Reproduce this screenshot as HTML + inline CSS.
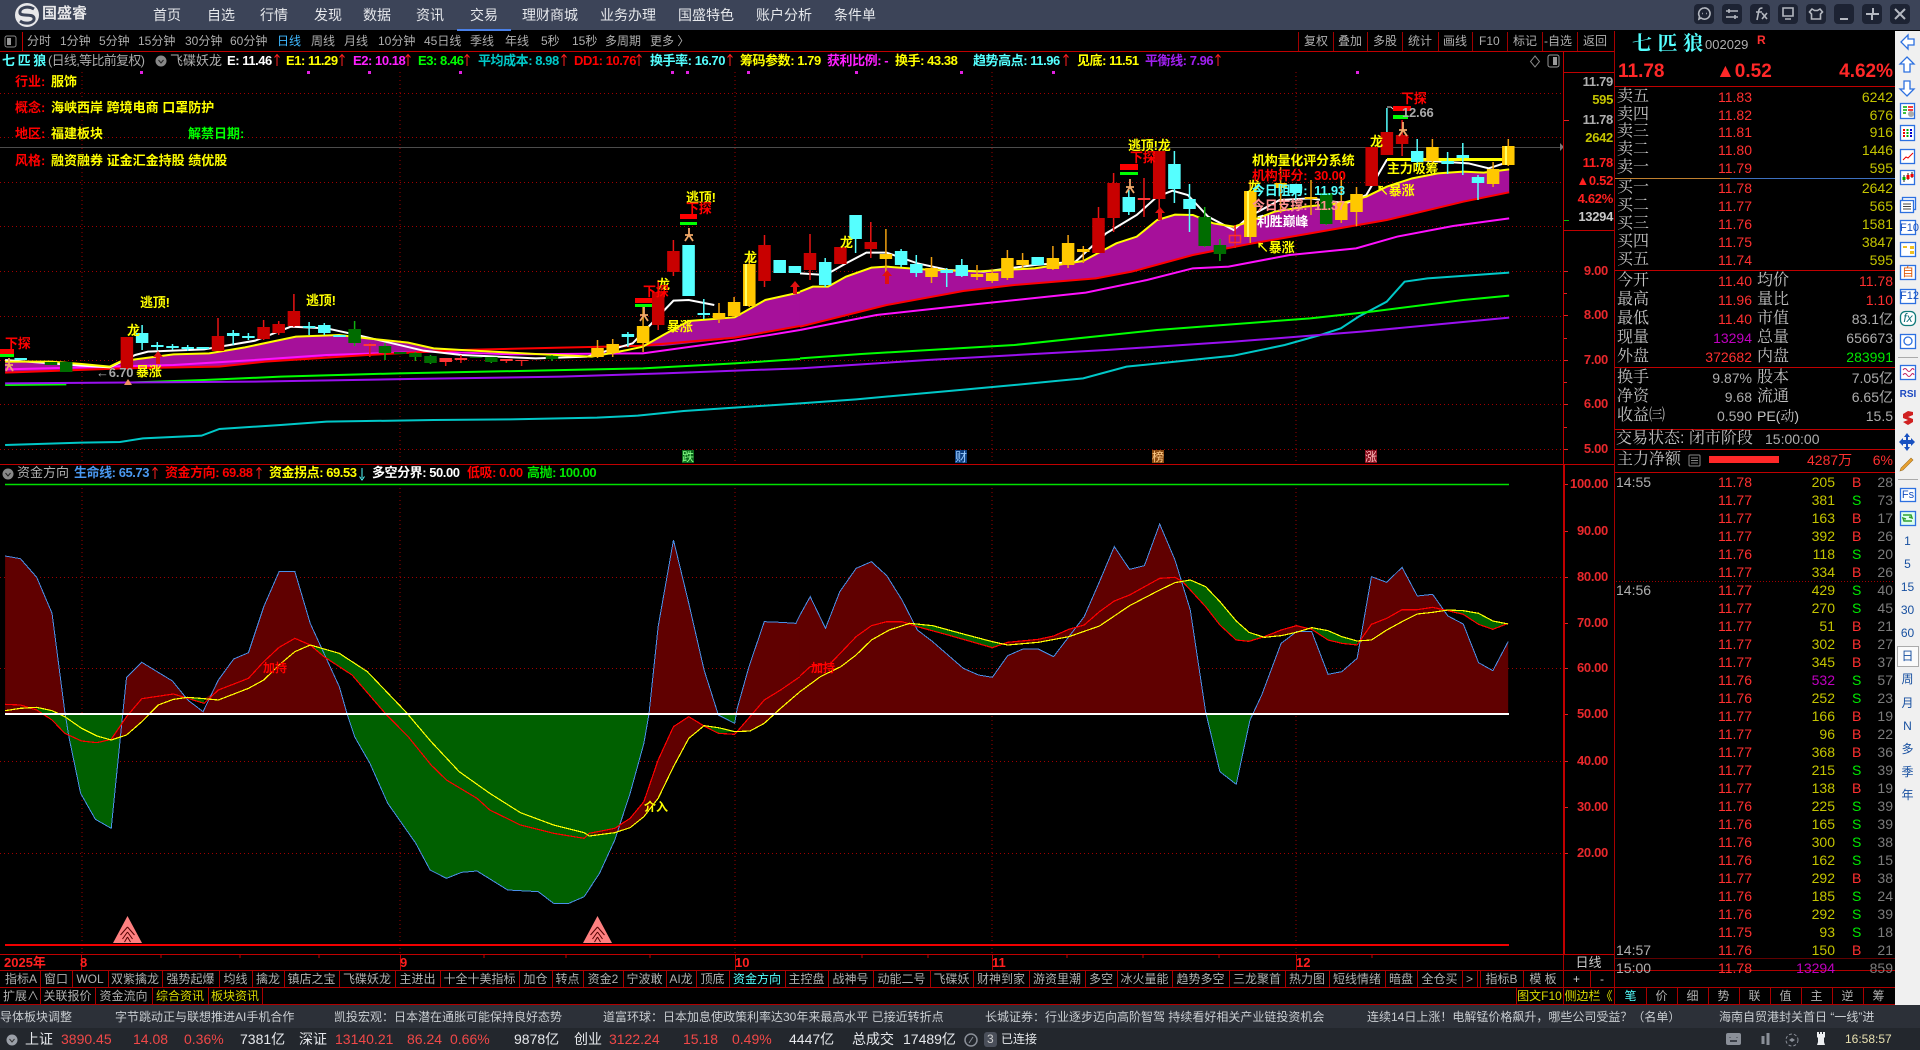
<!DOCTYPE html>
<html lang="zh-CN">
<head>
<meta charset="utf-8">
<title>国盛睿</title>
<style>
html,body{margin:0;padding:0;background:#000}
body{width:1920px;height:1050px;position:relative;overflow:hidden;font:12px/16px "Liberation Sans","WenQuanYi Zen Hei","Noto Sans CJK SC",sans-serif;color:#b0b0b0}
svg.bg{position:absolute;left:0;top:0}
.t{position:absolute;white-space:nowrap}
.n{font-size:14px;color:#e6e8ec;top:7px}
.p{color:#aeaeae;top:33px}
.i{font-size:13px;font-weight:bold;top:53px;letter-spacing:-.45px}
.l{font-size:13px;font-weight:bold;color:#ff0;}
.a{font-size:13px;font-weight:bold;color:#ff0;letter-spacing:-.2px}
.ax{font-size:13px;font-weight:bold;color:#e8282c;right:312px;letter-spacing:-.3px}
.at{font-size:13px;font-weight:bold;right:307px;letter-spacing:-.3px}
.tab{color:#b0b0b0;top:971px;text-align:center;height:16px}
.tb2{top:988px}
.lb{font-size:16px;color:#c4c4c4;left:1617px;font-family:"Liberation Sans","Noto Serif CJK SC",serif}
.lb2{left:1757px}
.v{font-size:14px;right:168px}
.v2{font-size:14px;right:27px}
.rd{color:#ff3030}.yl{color:#c4c400}.gy{color:#aeaeae}
.nw{color:#c8ccd0;top:1009px}
.st{font-size:14px;top:1031px}
#ticks{position:absolute;left:1615px;top:473px;width:280px;font-size:14px}
#ticks div{position:relative;height:18px;line-height:18px}
#ticks i,#ticks b,#ticks u,#ticks s,#ticks em{position:absolute;font-style:normal;font-weight:normal;text-decoration:none}
#ticks i{left:1px;color:#aeaeae}
#ticks b{right:143px;color:#ff3030}
#ticks u{right:60px;color:#c4c400}
#ticks s{left:237px;color:#ff3030}
#ticks s.g{color:#00e800}
#ticks em{right:2px;color:#7c7c7c}
</style>
</head>
<body>
<svg class="bg" width="1920" height="1050" viewBox="0 0 1920 1050" xmlns="http://www.w3.org/2000/svg">
<defs>
<clipPath id="up"><rect x="0" y="465" width="1563" height="249"/></clipPath>
<clipPath id="dn"><rect x="0" y="714" width="1563" height="230"/></clipPath>
</defs>
<rect width="1920" height="1050" fill="#000"/>
<!-- title bar -->
<rect width="1920" height="30" fill="#3c4458"/>
<rect x="457" y="29" width="54" height="2" fill="#4a80e8"/>
<!-- logo -->
<circle cx="27" cy="15" r="12" fill="#e8e8ea"/>
<path d="M34 9C27 5 19 8 20 13C21 17 33 13 34 18C35 23 26 25 20 21" fill="none" stroke="#3c4458" stroke-width="3"/>
<!-- window buttons -->
<g fill="#1d2333">
<rect x="1694" y="4" width="20" height="20" rx="4"/><rect x="1722" y="4" width="20" height="20" rx="4"/><rect x="1750" y="4" width="20" height="20" rx="4"/><rect x="1778" y="4" width="20" height="20" rx="4"/><rect x="1806" y="4" width="20" height="20" rx="4"/><rect x="1834" y="4" width="20" height="20" rx="4"/><rect x="1862" y="4" width="20" height="20" rx="4"/><rect x="1890" y="4" width="20" height="20" rx="4"/>
</g>
<g fill="none" stroke="#b4b8c0" stroke-width="1.6">
<path d="M1704 8a5.6 5.6 0 1 1-3 10l-2 1 .5-2.5a5.6 5.6 0 0 1 4.500-8.500z"/><path d="M1702 13.500h.8M1706 13.500h.8"/>
<path d="M1726 11h12M1726 17h12M1729 9v4M1735 15v4"/>
<path d="M1757 20l2-10q.5-2 3.500-2M1756 12h6M1762 13l5 6M1767 13l-5 6"/>
<path d="M1783 8h10v8h-10zM1785 19h6"/>
<path d="M1812 9l-2.500 3 2 2v5h9v-5l2-2-2.500-3-2.500 1.500h-3z"/>
<path d="M1840 19h8" stroke-width="2"/>
<path d="M1873 8v6M1866 14h7M1873 14v0M1872 14v6M1872 14h7" stroke-width="2"/>
<path d="M1895 9l10 10M1905 9l-10 10" stroke-width="2"/>
</g>
<!-- period toolbar -->
<rect x="5" y="36" width="11" height="11" rx="2" fill="none" stroke="#888"/><rect x="7" y="38" width="4" height="7" fill="#999"/>
<path d="M22.500 32V51" stroke="#c00000"/>
<g stroke="#a00000"><path d="M1298.500 32V51M1333.500 32V51M1367.500 32V51M1402.500 32V51M1438.500 32V51M1472.500 32V51M1507.500 32V51M1542.500 32V51M1577.500 32V51"/></g>
<path d="M0 51.500H1614" stroke="#c00000"/>
<!-- grid -->
<g stroke="#a00000" stroke-dasharray="1 3" fill="none" shape-rendering="crispEdges">
<path d="M0 93.500H1563M0 137.500H1563M0 182.500H1563M0 226.500H1563M0 271.500H1563M0 316.500H1563M0 360.500H1563M0 404.500H1563M0 449.500H1563"/>
<path d="M82 72V464M400 72V464M735 72V464M992 72V464M1296 72V464"/>
<path d="M82 484V954M400 484V954M735 484V954M992 484V954M1296 484V954"/>
<path d="M0 577.500H1563M0 668.500H1563M0 761.500H1563M0 853.500H1563"/>
</g>
<path d="M0 147.500H1560" stroke="#4c4c4c"/>
<path d="M1564 147l-4-4v8z" fill="#777"/>
<!-- ticks magenta -->
<g fill="#e020e0"><rect x="140" y="71" width="3" height="3"/><rect x="307" y="71" width="3" height="3"/><rect x="368" y="71" width="3" height="3"/><rect x="459" y="71" width="3" height="3"/><rect x="671" y="71" width="3" height="3"/><rect x="686" y="71" width="3" height="3"/><rect x="747" y="71" width="3" height="3"/><rect x="855" y="71" width="3" height="3"/><rect x="960" y="71" width="3" height="3"/><rect x="1052" y="71" width="3" height="3"/><rect x="1356" y="71" width="3" height="3"/></g>

<!-- upper fill -->
<g transform="translate(0,260) scale(.5102,.33333)" fill="#a6109a">
<polygon points="10,305 100,305 160,312 215,320 235,305 265,298 340,283 410,280 480,262 580,230 665,225 720,235 800,248 850,265 880,270 880,272 720,285 640,290 520,305 430,320 240,325 100,333 10,338"/>
<polygon points="1250,262 1300,225 1350,183 1440,172 1500,120 1568,97 1568,198 1440,235 1300,258 1250,260"/>
</g>
<g transform="translate(800,100) scale(.5102,.33333)" fill="#a6109a">
<polygon points="0,575 25,560 55,560 90,530 140,503 170,500 260,510 350,514 460,505 555,483 620,430 660,410 700,360 735,344 770,345 810,370 850,380 880,365 930,335 990,320 1060,310 1110,290 1150,260 1200,235 1250,220 1300,215 1340,218 1390,208 1390,277 1300,305 1150,360 1000,400 880,432 770,465 650,515 580,535 420,555 320,573 170,615 0,680"/>
</g>
<!-- upper lines -->
<g fill="none" stroke-linejoin="miter">
<g transform="translate(0,260) scale(.5102,.33333)">
<polyline vector-effect="non-scaling-stroke" stroke-width="2" stroke="#00c8c8" points="10,555 160,548 235,546 280,535 395,527 430,507 550,495 640,485 850,480 1000,478 1170,473 1250,467 1340,453 1568,430"/>
<polyline vector-effect="non-scaling-stroke" stroke-width="2" stroke="#00ff00" points="10,375 130,373"/>
<polyline vector-effect="non-scaling-stroke" stroke-width="2" stroke="#00ff00" points="250,368 400,360 550,350 780,340 1050,332 1260,325 1440,310 1568,297"/>
<polyline vector-effect="non-scaling-stroke" stroke-width="2" stroke="#9a10f0" points="10,370 500,365 800,357 1100,350 1300,340 1568,325"/>
<polyline vector-effect="non-scaling-stroke" stroke-width="2" stroke="#ff10ff" points="10,328 160,322 340,315 480,302 640,285 850,275 1000,283 1260,280 1440,242 1568,210"/>
<polyline vector-effect="non-scaling-stroke" stroke-width="2" stroke="#ff0000" points="10,338 100,333 240,325 430,320 520,305 720,285 900,270 1100,263 1250,258 1440,233 1568,198"/>
<polyline vector-effect="non-scaling-stroke" stroke-width="2" stroke="#ffffff" points="10,300 100,310 160,317 215,322 265,285 290,275 400,268 500,242 570,200 640,205 700,225 830,272 905,285 1050,295 1150,290 1240,250 1320,122 1350,120 1400,135"/>
<polyline vector-effect="non-scaling-stroke" stroke-width="2" stroke="#ffff00" points="10,305 100,305 160,312 215,320 235,305 265,298 340,283 410,280 480,262 580,230 665,225 720,235 800,248 850,265 905,270 965,275 1050,282 1160,290 1230,270 1260,260 1300,225 1350,183 1440,172 1500,120 1568,97"/>
</g>
<g transform="translate(800,100) scale(.5102,.33333)">
<polyline vector-effect="non-scaling-stroke" stroke-width="2" stroke="#00c8c8" points="0,910 110,898 300,872 420,855 555,835 640,800 850,767 950,735 1020,705 1060,685 1095,650 1150,605 1185,545 1230,535 1390,518"/>
<polyline vector-effect="non-scaling-stroke" stroke-width="2" stroke="#00ff00" points="0,775 120,762 420,735 700,690 1000,655 1120,635 1300,600 1390,587"/>
<polyline vector-effect="non-scaling-stroke" stroke-width="2" stroke="#9a10f0" points="0,805 250,780 600,750 850,725 1100,695 1390,653"/>
<polyline vector-effect="non-scaling-stroke" stroke-width="2" stroke="#ff10ff" points="0,690 150,645 330,615 560,578 680,540 770,505 840,500 960,465 1090,445 1170,410 1280,378 1390,355"/>
<polyline vector-effect="non-scaling-stroke" stroke-width="2" stroke="#ff0000" points="0,680 170,615 320,573 420,555 580,535 650,515 770,465 880,432 1000,400 1150,360 1300,305 1390,277"/>
<polyline vector-effect="non-scaling-stroke" stroke-width="2" stroke="#ffffff" points="0,520 50,525 90,490 130,458 170,458 230,490 290,510 360,515 460,495 540,485 600,400 660,345 700,290 730,272 760,285 800,350 850,390 880,350 940,300 1000,295 1070,310 1110,285 1150,180 1210,180 1310,190 1350,205 1390,185"/>
<polyline vector-effect="non-scaling-stroke" stroke-width="2" stroke="#ffff00" points="0,575 25,560 55,560 90,530 140,503 170,500 260,510 350,514 460,505 555,483 620,430 660,410 700,360 735,344 770,345 810,370 850,380 880,365 930,335 990,320 1060,310 1110,290 1150,260 1200,235 1250,220 1300,215 1340,218 1390,208"/>
</g>
</g>
<path d="M1387 159.500H1503" stroke="#ffff00" stroke-width="3"/>
<!-- wicks -->
<g fill="none" stroke-width="1.500">
<path stroke="#e81414" d="M218 318V351M263.600 320V340M278.700 321V335M293.900 294V327M369.800 343V357M415.400 352V352M445.700 358V366M460.900 355V363M506.400 359V363M521.600 360V366M658.200 280V330M673.400 240V276M764.500 235V287M810 234V280M870.800 222V258M1098.500 207V253M1113.600 173V232M1144 178V217M1159.200 150V215M1235.100 225V248M1402.100 120V156"/>
<path stroke="#55ffff" d="M142.100 325V350M157.300 342V350M172.500 344V350M187.700 345V351M233.200 330V345M248.400 333V340M309.100 322V335M324.300 323V335M627.900 332V347M703.800 299V319M825.200 258V287M855.600 215V253M901.100 249V267M916.300 255V277M946.700 268V287M961.800 259V277M1128.800 190V215M1174.400 151V203M1189.500 184V232M1295.800 184V203M1386.900 108V133M1417.200 139V167M1447.600 152V174M1462.800 143V175M1478 175V200"/>
<path stroke="#f0a010" d="M597.500 340V358M612.700 339V357M643.100 307V352M719 303V323M734.100 297V317M749.300 255V307M885.900 229V283M931.500 257V283M977 265V280M992.200 270V283M1007.400 250V280M1022.600 253V268M1052.900 246V270M1068.100 235V268M1083.300 246V263M1250.300 180V243M1280.600 167V213M1311 180V215M1341.300 177V223M1356.500 187V226M1432.400 139V165M1493.100 162V187M1508.300 139V166"/>
<path stroke="#10b010" d="M354.600 321V346M385 343V360M415.400 352V361M430.500 355V364M491.300 357V363M552 355V361M1204.700 207V247M1219.900 239V261M1326.200 193V225"/>
</g>
<!-- bodies -->
<g fill="none" stroke-width="12.500">
<path stroke="#c80000" d="M126.900 337V368M218 336V351M263.600 327V339M278.700 324V333M293.900 311V326M658.200 292V325M673.400 251V272M764.500 245V281M810 253V270M840.400 247V264M870.800 242V249M1098.500 218V253M1113.600 183V218M1159.200 151V199M1371.700 147V186M1386.900 132V155M1402.100 135V144"/>
<path stroke="#ff3838" d="M369.800 344V346M445.700 358V362M460.900 358V360M506.400 359V361M521.600 360V361M1144 198V200"/>
<path stroke="#55ffff" d="M142.100 333V343M157.300 345V347M172.500 346V348M187.700 347V349M202.800 347V349M20.700 358V360M233.200 333V336M248.400 336V338M309.100 326V328M324.300 325V333M339.500 335V337M627.900 334V337M688.600 245V296M703.800 313V315M779.700 260V273M794.900 266V273M825.200 262V285M855.600 215V239M901.100 251V265M916.300 264V273M946.700 270V273M961.800 265V276M1037.700 257V265M1128.800 197V212M1174.400 164V189M1189.500 199V209M1295.800 184V193M1417.200 151V162M1447.600 161V164M1462.800 155V158M1478 177V183"/>
<path stroke="#ffc800" d="M597.500 348V357M612.700 344V353M643.100 326V343M719 313V319M734.100 302V316M749.300 264V306M885.900 254V259M931.500 268V277M977 274V277M992.200 273V281M1007.400 258V278M1022.600 260V265M1052.900 258V269M1068.100 243V265M1083.300 249V252M1250.300 191V237M1280.600 183V188M1311 197V199M1341.300 203V220M1356.500 194V212M1432.400 147V161M1493.100 169V184M1508.300 146V165"/>
<path stroke="#006c00" d="M51 362V365M66.200 362V372M354.600 329V343M385 346V353M400.200 352V354M415.400 353V357M430.500 356V363M476.100 357V358M491.300 357V362M552 356V359M1204.700 217V246M1219.900 245V254M1326.200 193V224"/>
</g>
<path d="M1505 146h2v19h-2zM745 264h2v42h-2zM1247 191h2v46h-2z" fill="#ffff60"/>
<rect x="1229.500" y="235.500" width="11" height="7" fill="none" stroke="#ff3030" stroke-width="1.500"/>
<!-- signal boxes -->
<rect x="0" y="349" width="14" height="5" fill="#ff0000"/><rect x="0" y="354" width="14" height="3" fill="#00ff00"/>
<rect x="635" y="298" width="17" height="5" fill="#ff0000"/><rect x="635" y="304" width="17" height="3" fill="#00ff00"/>
<rect x="680" y="214" width="17" height="5" fill="#ff0000"/><rect x="680" y="222" width="17" height="3" fill="#00ff00"/>
<rect x="1120" y="164" width="18" height="6" fill="#ff0000"/><rect x="1120" y="172" width="18" height="3" fill="#00ff00"/>
<rect x="1393" y="106" width="18" height="5" fill="#ff0000"/><rect x="1393" y="115" width="15" height="4" fill="#00ff00"/>
<path d="M1387 107h4l2 2" stroke="#ddd" fill="none"/>
<!-- runners -->
<g fill="none" stroke="#f0a868" stroke-width="1.800">
<path d="M9 358v7l-3 6M9 365l4 6M5 365h8"/>
<path d="M644 307v8l-4 6M644 315l4 6M640 315h8"/>
<path d="M689 228v7l-4 6M689 235l4 6M685 235h8"/>
<path d="M1130 179v8l-4 6M1130 187l4 6M1126 187h8"/>
<path d="M1403 122v8l-4 6M1403 130l4 6M1399 130h8"/>
</g>
<!-- up arrows -->
<g fill="#e01010">
<path d="M158 351l-5 6h3v7h4v-7h3z"/><path d="M795 281l-5 6h3v7h4v-7h3z"/><path d="M887 270l-5 6h3v8h4v-8h3z"/><path d="M1160 207l-5 6h3v7h4v-7h3z"/>
</g>
<path d="M128 379l-4 6h8z" fill="#f09060"/>
<!-- label boxes -->
<rect x="682" y="450" width="12" height="13" fill="#0b6a1c"/><rect x="955" y="450" width="12" height="13" fill="#0d3f80"/><rect x="1152" y="450" width="12" height="13" fill="#8a4a10"/><rect x="1365" y="450" width="12" height="13" fill="#8a1020"/>

<!-- right axis -->
<path d="M1563.500 52V464" stroke="#c00000"/>
<path d="M1564 72.500H1614M1564 230.500H1614" stroke="#c00000"/>
<path d="M1564 120.500h5" stroke="#e02020"/><path d="M1564 220.500h5" stroke="#00c000"/>
<path d="M1564 271.500h4M1564 315.500h4M1564 360.500h4M1564 404.500h4M1564 449.500h4M1564 293.500h3M1564 338.500h3M1564 382.500h3M1564 427.500h3" stroke="#e02020"/>
<path d="M0 464.500H1614" stroke="#c00000" stroke-width="1"/>
<!-- lower panel -->
<path d="M5 484.500H1509" stroke="#00e000" stroke-width="1.500"/>
<path d="M1564 465V954" stroke="#c00000" stroke-width="2"/>
<path d="M1565 484.500h3M1565 531.500h3M1565 577.500h3M1565 623.500h3M1565 668.500h3M1565 714.500h3M1565 761.500h3M1565 807.500h3M1565 853.500h3" stroke="#e02020"/>
<g clip-path="url(#up)">
<g transform="translate(0,460) scale(.5102,.33333)" fill="#600000">
<polygon points="10,288 40,296 72,352 102,460 127,755 135,830 158,1000 187,1078 218,1105 240,770 248,652 278,607 310,637 338,663 368,720 398,755 428,660 458,597 487,578 517,440 547,335 578,335 608,490 635,580 665,680 680,760 695,830 725,910 760,1030 815,1150 843,1230 875,1255 905,1237 935,1233 995,1290 1055,1295 1085,1330 1115,1330 1145,1310 1175,1240 1205,1140 1235,1000 1262,850 1272,762 1290,500 1320,240 1350,430 1380,630 1408,765 1440,790 1445,745 1468,620 1498,485 1530,487 1560,490 1568,465 1568,764 10,764"/>
</g>
<g transform="translate(800,460) scale(.5102,.33333)" fill="#600000">
<polygon points="0,465 20,410 50,505 78,395 110,325 140,305 170,347 200,420 230,510 260,545 320,625 350,645 377,652 407,587 437,567 467,567 497,590 527,530 557,470 587,365 616,260 646,328 675,317 705,192 735,300 765,450 795,755 823,935 855,973 882,780 905,705 943,550 973,515 1003,515 1035,643 1062,635 1092,595 1120,350 1150,367 1180,322 1210,408 1240,403 1270,468 1300,492 1330,608 1358,632 1388,545 1388,764 0,764"/>
</g>
</g>
<g clip-path="url(#dn)">
<g transform="translate(0,460) scale(.5102,.33333)" fill="#006000">
<polygon points="10,288 40,296 72,352 102,460 127,755 135,830 158,1000 187,1078 218,1105 240,770 248,652 278,607 310,637 338,663 368,720 398,755 428,660 458,597 487,578 517,440 547,335 578,335 608,490 635,580 665,680 680,760 695,830 725,910 760,1030 815,1150 843,1230 875,1255 905,1237 935,1233 995,1290 1055,1295 1085,1330 1115,1330 1145,1310 1175,1240 1205,1140 1235,1000 1262,850 1272,762 1290,500 1320,240 1350,430 1380,630 1408,765 1440,790 1445,745 1468,620 1498,485 1530,487 1560,490 1568,465 1568,764 10,764"/>
</g>
<g transform="translate(800,460) scale(.5102,.33333)" fill="#006000">
<polygon points="0,465 20,410 50,505 78,395 110,325 140,305 170,347 200,420 230,510 260,545 320,625 350,645 377,652 407,587 437,567 467,567 497,590 527,530 557,470 587,365 616,260 646,328 675,317 705,192 735,300 765,450 795,755 823,935 855,973 882,780 905,705 943,550 973,515 1003,515 1035,643 1062,635 1092,595 1120,350 1150,367 1180,322 1210,408 1240,403 1270,468 1300,492 1330,608 1358,632 1388,545 1388,764 0,764"/>
</g>
</g>
<!-- between lines -->
<g transform="translate(0,460) scale(.5102,.33333)">
<g fill="#006000">
<polygon points="72,742 102,752 127,770 160,805 190,828 218,840 190,848 160,843 127,820 102,780 72,750"/>
<polygon points="340,705 368,712 400,716 400,730"/>
<polygon points="608,555 665,580 720,635 795,755 845,845 900,935 960,1000 1020,1058 1085,1095 1145,1118 1155,1128 1145,1135 1085,1120 1020,1095 960,1050 935,1015 875,960 845,915 800,830 755,760 690,645 635,590"/>
<polygon points="1380,797 1408,803 1440,815 1408,820"/>
</g>
<g fill="#600000">
<polygon points="218,838 248,770 278,716 340,702 310,735 278,785 248,825 218,840"/>
<polygon points="400,716 428,690 487,655 517,605 547,562 578,535 608,555 578,575 547,615 517,660 487,685 428,720"/>
<polygon points="1155,1125 1205,1105 1235,1075 1262,1025 1290,900 1320,800 1350,770 1380,798 1350,835 1320,920 1290,1015 1262,1070 1235,1103 1205,1118"/>
<polygon points="1445,815 1470,770 1498,720 1530,690 1568,650 1568,695 1530,745 1498,790 1470,813"/>
</g>
</g>
<g transform="translate(800,460) scale(.5102,.33333)">
<g fill="#600000">
<polygon points="0,648 20,620 60,610 110,530 140,497 170,485 200,485 215,490 175,510 140,540 110,585 80,620 40,650 0,695"/>
<polygon points="400,550 467,538 497,528 527,508 557,495 587,455 616,423 646,405 705,355 735,352 750,365 735,368 705,390 646,437 587,498 527,530 467,547 407,555"/>
<polygon points="910,531 943,510 973,497 1003,505 973,517 943,527"/>
<polygon points="1097,545 1120,493 1150,475 1180,449 1210,449 1240,442 1260,448 1240,457 1210,462 1180,485 1150,510 1120,540"/>
</g>
<g fill="#006000">
<polygon points="215,490 260,497 320,522 377,545 400,552 377,563 290,525 230,500"/>
<polygon points="750,365 765,360 795,380 823,425 855,483 880,517 910,532 880,544 855,540 823,495 795,440"/>
<polygon points="1003,505 1035,512 1062,530 1092,543 1092,555 1062,550 1035,540"/>
<polygon points="1260,450 1270,450 1300,452 1330,460 1358,483 1388,492 1388,490 1358,508 1330,493 1300,463 1270,452"/>
</g>
</g>
<g fill="none" shape-rendering="crispEdges">
<g transform="translate(0,460) scale(.5102,.33333)">
<polyline vector-effect="non-scaling-stroke" stroke-width="1" stroke="#4a90e8" points="10,288 40,296 72,352 102,460 127,755 135,830 158,1000 187,1078 218,1105 240,770 248,652 278,607 310,637 338,663 368,720 398,755 428,660 458,597 487,578 517,440 547,335 578,335 608,490 635,580 665,680 680,760 695,830 725,910 760,1030 815,1150 843,1230 875,1255 905,1237 935,1233 995,1290 1055,1295 1085,1330 1115,1330 1145,1310 1175,1240 1205,1140 1235,1000 1262,850 1272,762 1290,500 1320,240 1350,430 1380,630 1408,765 1440,790 1445,745 1468,620 1498,485 1530,487 1560,490 1568,465"/>
<polyline vector-effect="non-scaling-stroke" stroke-width="1.200" stroke="#ff0000" points="10,733 40,735 72,750 102,780 127,820 160,843 190,848 218,838 248,770 278,716 340,702 400,730 428,690 487,655 517,605 547,562 578,535 608,555 635,590 690,645 755,760 800,830 845,915 875,960 935,1015 960,1050 1020,1095 1085,1120 1145,1135 1155,1120 1205,1105 1235,1075 1262,1025 1290,900 1320,800 1350,770 1380,798 1408,820 1440,823 1470,770 1498,720 1530,690 1568,650"/>
<polyline vector-effect="non-scaling-stroke" stroke-width="1.200" stroke="#ffff00" points="10,752 40,745 72,742 102,752 127,770 160,805 190,828 218,840 248,825 278,785 310,735 340,718 368,712 400,716 428,720 487,685 517,660 547,615 578,575 608,555 665,580 720,635 795,755 845,845 900,935 960,1000 1020,1058 1085,1095 1145,1118 1155,1128 1205,1118 1235,1103 1262,1070 1290,1015 1320,920 1350,835 1380,797 1408,803 1440,815 1470,813 1498,790 1530,745 1568,695"/>
</g>
<g transform="translate(800,460) scale(.5102,.33333)">
<polyline vector-effect="non-scaling-stroke" stroke-width="1" stroke="#4a90e8" points="0,465 20,410 50,505 78,395 110,325 140,305 170,347 200,420 230,510 260,545 320,625 350,645 377,652 407,587 437,567 467,567 497,590 527,530 557,470 587,365 616,260 646,328 675,317 705,192 735,300 765,450 795,755 823,935 855,973 882,780 905,705 943,550 973,515 1003,515 1035,643 1062,635 1092,595 1120,350 1150,367 1180,322 1210,408 1240,403 1270,468 1300,492 1330,608 1358,632 1388,545"/>
<polyline vector-effect="non-scaling-stroke" stroke-width="1.200" stroke="#ff0000" points="0,648 20,620 60,610 110,530 140,497 170,485 200,485 230,500 290,525 377,563 407,547 467,538 497,528 527,508 557,495 587,455 616,423 646,405 705,355 735,352 750,365 795,440 823,495 855,540 880,544 910,530 943,510 973,497 1003,508 1035,540 1062,550 1092,555 1120,493 1150,475 1180,449 1210,449 1240,442 1270,452 1300,463 1330,493 1358,508 1388,490"/>
<polyline vector-effect="non-scaling-stroke" stroke-width="1.200" stroke="#ffff00" points="0,695 40,650 80,620 110,585 140,540 175,510 215,490 260,497 320,522 377,545 407,555 467,547 527,530 587,498 646,437 705,390 735,368 765,360 795,380 823,425 855,483 880,517 910,532 943,527 973,517 1003,503 1035,512 1062,530 1092,543 1120,540 1150,510 1180,485 1210,462 1240,457 1270,450 1300,452 1330,460 1358,483 1388,492"/>
</g>
</g>
<rect x="5" y="713" width="1504" height="2" fill="#fff"/>
<rect x="5" y="944" width="1504" height="2" fill="#f00000"/>
<!-- mountains -->
<g>
<path d="M127.500 916L113 943H142z" fill="#ff8080"/>
<path d="M127.500 927l-7 8M127.500 927l7 8M127.500 932l-5 7M127.500 932l5 7M127.500 937l-3 5M127.500 937l3 5" stroke="#500" fill="none"/>
<path d="M597.500 916L583 943H612z" fill="#ff8080"/>
<path d="M597.500 927l-7 8M597.500 927l7 8M597.500 932l-5 7M597.500 932l5 7M597.500 937l-3 5M597.500 937l3 5" stroke="#500" fill="none"/>
</g>
<!-- date axis -->
<path d="M0 954.500H1614" stroke="#c00000"/>
<path d="M81.500 955V970M400.500 955V970M735.500 955V970M992.500 955V970M1296.500 955V970" stroke="#c00000"/>
<path d="M161 955v3M240 955v3M319 955v3M484 955v3M566 955v3M650 955v3M862 955v3M928 955v3M1067 955v3M1143 955v3M1219 955v3M1372 955v3" stroke="#c00000"/>
<!-- tab rows -->
<path d="M0 970.500H1895M0 987.500H1895M0 1004.500H1895M0 954.500H0" stroke="#b00000"/>
<g stroke="#a80000">
<path d="M40.500 971V987M72.500 971V987M108.500 971V987M162.500 971V987M219.500 971V987M252.500 971V987M284.500 971V987M339.500 971V987M395.500 971V987M440.500 971V987M519.500 971V987M552.500 971V987M583.500 971V987M623.500 971V987M666.500 971V987M696.500 971V987M729.500 971V987M785.500 971V987M828.500 971V987M873.500 971V987M930.500 971V987M973.500 971V987M1029.500 971V987M1085.500 971V987M1117.500 971V987M1172.500 971V987M1229.500 971V987M1285.500 971V987M1329.500 971V987M1385.500 971V987M1417.500 971V987M1462.500 971V987M1477.500 971V987M1480.500 971V987M1523.500 971V987"/>
<path d="M40.500 988V1004M95.500 988V1004M152.500 988V1004M208.500 988V1004M262.500 988V1004M1516.500 988V1004M1563.500 955V1004M1590.500 971V987M1614.500 31V1004"/>
<path d="M1646.500 988V1004M1677.500 988V1004M1708.500 988V1004M1739.500 988V1004M1770.500 988V1004M1801.500 988V1004M1832.500 988V1004M1863.500 988V1004"/>
</g>
<!-- right panel lines -->
<g>
<path d="M1615 86.500H1895" stroke="#c00000"/>
<path d="M1615 178.500H1730" stroke="#c08030"/><path d="M1730 178.500H1895" stroke="#3d70c0"/>
<path d="M1615 270.500H1895M1615 367.500H1895M1615 429.500H1895M1615 449.500H1895M1615 472.500H1895" stroke="#c00000"/>
<path d="M1616 581.500H1895" stroke="#a00000" stroke-dasharray="1 2"/>
<path d="M1615 958.500H1895" stroke="#600000"/>
<rect x="1689" y="455" width="11" height="11" rx="1" fill="none" stroke="#888"/><path d="M1691 458h7M1691 460.500h7M1691 463h7" stroke="#888"/>
<rect x="1709" y="456" width="70" height="7" fill="#ff2828"/>
</g>
<!-- sidebar -->
<rect x="1895" y="31" width="25" height="974" fill="#f0f0f0"/>
<g fill="none" stroke="#2c70e0" stroke-width="1.300">
<path fill="#fff" d="M1901 42l7-7v4h6v6h-6v4z"/>
<path fill="#fff" d="M1907 57l7 7h-4v8h-6v-8h-4z"/>
<path fill="#fff" d="M1907 96l7-7h-4v-8h-6v8h-4z"/>
<rect x="1900.500" y="103.500" width="14" height="15" fill="#fff"/>
<rect x="1900.500" y="125.500" width="14" height="15" fill="#fff"/>
<rect x="1900.500" y="149.500" width="14" height="14" fill="#fff"/>
<rect x="1900.500" y="170.500" width="14" height="14" fill="#fff"/>
<rect x="1902.500" y="197.500" width="13" height="12" fill="#fff"/>
<rect x="1900.500" y="200.500" width="13" height="12" fill="#fff"/>
<rect x="1900.500" y="220.500" width="15" height="14" fill="#fff"/>
<rect x="1900.500" y="242.500" width="15" height="14" fill="#fff"/>
<rect x="1900.500" y="265.500" width="15" height="14" fill="#fff"/>
<rect x="1900.500" y="289.500" width="15" height="14" fill="#fff"/>
<rect x="1900.500" y="311.500" width="15" height="14" rx="5" fill="#fff" stroke="#107a7a"/>
<rect x="1900.500" y="334.500" width="15" height="14" fill="#fff"/>
<circle cx="1908" cy="341" r="4"/>
<rect x="1900.500" y="365.500" width="15" height="14" fill="#fff"/>
<rect x="1900.500" y="488.500" width="15" height="13" fill="#fff"/>
<rect x="1900.500" y="511.500" width="15" height="14" fill="#dfe"/>
</g>
<path d="M1903 107h4M1903 110h4M1903 113h3" stroke="#0a0" stroke-width="1.500"/><path d="M1908 107h5M1908 110h5" stroke="#e00" stroke-width="1.500"/><circle cx="1911" cy="114" r="3" fill="#aaa"/>
<path d="M1903 130h2M1903 133h2M1903 136h2" stroke="#e00" stroke-width="2"/><path d="M1906.500 130h2M1906.500 133h2M1906.500 136h2" stroke="#0a0" stroke-width="2"/><path d="M1910 130h2M1910 133h2M1910 136h2" stroke="#00c" stroke-width="2"/>
<path d="M1903 160l3-3 2 1 5-5" stroke="#e00" fill="none"/>
<path d="M1904 175v7M1908 173v7M1912 172v6" stroke="#222"/><path d="M1904 177v3" stroke="#0a0" stroke-width="3"/><path d="M1908 175v4" stroke="#e00" stroke-width="3"/><path d="M1912 174v3" stroke="#e00" stroke-width="3"/>
<path d="M1903 204h8M1903 206.500h8M1903 209h8" stroke="#444"/>
<path d="M1903 246h4v2h-4zM1910 246h4v3h-4zM1910 251h4v3h-4z" fill="#f0c020"/>
<path d="M1903 370q2-3 4 0t4 0t3 0M1903 375q2-3 4 0t4 0t3 0" stroke="#c02060" fill="none"/>
<path d="M1908 411l-5 3v4l5 2-5 2 5 3 5-3v-3l-5-2 5-2v-3z" fill="#d02020"/>
<path d="M1907 433l3 4h-2v3h3v-2l4 4-4 4v-2h-3v3h2l-3 4-3-4h2v-3h-3v2l-4-4 4-4v2h3v-3h-2z" fill="#1850c0"/>
<path d="M1900 471l3-1 10-10-2-2-10 10z" fill="#e8a030" stroke="#a07020" stroke-width=".6"/>
<path d="M1903 515h8l1 3-3-1M1912 521h-8l-1-3 3 1" stroke="#30a030" fill="none" stroke-width="1.500"/>
<path d="M1898 357.500h20M1898 479.500h20" stroke="#aaa"/>
<rect x="1897.500" y="646.500" width="21" height="20" fill="#fafafa" stroke="#aaa"/>
<!-- status -->
<rect y="1005" width="1920" height="23" fill="#2c3038"/>
<rect y="1028" width="1920" height="22" fill="#23272d"/>
<circle cx="12" cy="1040" r="5.500" fill="#9ba0a8"/><path d="M9.500 1039l2.500 3 2.500-3" stroke="#333" fill="none"/>
<circle cx="971" cy="1040" r="6" fill="none" stroke="#8a8f98" stroke-width="1.500"/><path d="M969 1043l4-6" stroke="#8a8f98"/>
<rect x="984" y="1032" width="13" height="15" rx="3" fill="#4a4f5a"/>
<rect x="1726" y="1033" width="15" height="12" rx="2" fill="#8a8f98"/><path d="M1730 1037v.5M1737 1037v.5M1730 1041h7" stroke="#23272d" stroke-width="1.500"/>
<path d="M1763 1036v8M1768 1033v12" stroke="#8a8f98" stroke-width="3"/>
<circle cx="1792" cy="1040" r="6" fill="none" stroke="#8a8f98" stroke-dasharray="3 2"/><path d="M1789 1040l3-2 3 2-3 2z" fill="#8a8f98"/>
<path d="M1817 1032h2v2h1v-2h2v2h1v-2h2v5l-1 1v4l1 3h-8l1-3v-4l-1-1z" fill="#eceef0"/>
<!-- info icons -->
<circle cx="161" cy="61" r="5.500" fill="#888"/><path d="M158.500 60l2.500 3 2.500-3" stroke="#222" fill="none"/>
<circle cx="8" cy="474" r="5.500" fill="#888"/><path d="M5.500 473l2.500 3 2.500-3" stroke="#222" fill="none"/>
<path d="M1535 56l4.500 5.500-4.500 5.500-4.500-5.500z" fill="none" stroke="#888"/>
<rect x="1548" y="55" width="11" height="12" rx="2" fill="none" stroke="#999"/><rect x="1553" y="57" width="4" height="8" fill="#999"/>
<!-- info arrows -->
<g stroke="#ff2020" fill="none"><path d="M277 66V55M274.500 57.500L277 54.500L279.500 57.500M342 66V55M339.500 57.500L342 54.500L344.500 57.500M408 66V55M405.500 57.500L408 54.500L410.500 57.500M467 66V55M464.500 57.500L467 54.500L469.500 57.500M564 66V55M561.500 57.500L564 54.500L566.500 57.500M639 66V55M636.500 57.500L639 54.500L641.500 57.500M730 66V55M727.500 57.500L730 54.500L732.500 57.500M1066 66V55M1063.500 57.500L1066 54.500L1068.500 57.500M1218 66V55M1215.500 57.500L1218 54.500L1220.500 57.500M155 479V468M152.500 470.500L155 467.500L157.500 470.500M259 479V468M256.500 470.500L259 467.500L261.500 470.500"/></g>
<path d="M362 468V478M359.500 476.500L362 480L364.500 476.500" stroke="#55ffff" fill="none"/>
</svg>

<!-- title bar text -->
<span class="t" style="left:42px;top:6px;font-size:15px;color:#e8e8ea;font-weight:bold">国盛睿</span>
<span class="t n" style="left:153px">首页</span><span class="t n" style="left:207px">自选</span><span class="t n" style="left:260px">行情</span><span class="t n" style="left:314px">发现</span><span class="t n" style="left:363px">数据</span><span class="t n" style="left:416px">资讯</span><span class="t n" style="left:470px">交易</span><span class="t n" style="left:522px">理财商城</span><span class="t n" style="left:600px">业务办理</span><span class="t n" style="left:678px">国盛特色</span><span class="t n" style="left:756px">账户分析</span><span class="t n" style="left:834px">条件单</span>

<!-- period -->
<span class="t p" style="left:27px">分时</span><span class="t p" style="left:60px">1分钟</span><span class="t p" style="left:99px">5分钟</span><span class="t p" style="left:138px">15分钟</span><span class="t p" style="left:185px">30分钟</span><span class="t p" style="left:230px">60分钟</span><span class="t p" style="left:277px;color:#3fb8ff">日线</span><span class="t p" style="left:311px">周线</span><span class="t p" style="left:344px">月线</span><span class="t p" style="left:378px">10分钟</span><span class="t p" style="left:424px">45日线</span><span class="t p" style="left:470px">季线</span><span class="t p" style="left:505px">年线</span><span class="t p" style="left:541px">5秒</span><span class="t p" style="left:572px">15秒</span><span class="t p" style="left:605px">多周期</span><span class="t p" style="left:650px">更多 〉</span>
<span class="t p" style="left:1304px">复权</span><span class="t p" style="left:1338px">叠加</span><span class="t p" style="left:1373px">多股</span><span class="t p" style="left:1408px">统计</span><span class="t p" style="left:1443px">画线</span><span class="t p" style="left:1479px">F10</span><span class="t p" style="left:1513px">标记</span><span class="t p" style="left:1544px">-自选</span><span class="t p" style="left:1583px">返回</span>

<!-- info row -->
<span class="t" style="left:2px;top:53px;font-size:13px;font-weight:bold;color:#55ffff;letter-spacing:-.5px">七 匹 狼</span>
<span class="t" style="left:48px;top:53px;font-size:13px;color:#aaa;letter-spacing:-.7px">(日线,等比前复权)</span>
<span class="t i" style="left:170px;color:#b0b0b0;font-weight:normal;letter-spacing:0">飞碟妖龙</span>
<span class="t i" style="left:227px;color:#fff">E: 11.46</span>
<span class="t i" style="left:286px;color:#ff0">E1: 11.29</span>
<span class="t i" style="left:353px;color:#ff20ff">E2: 10.18</span>
<span class="t i" style="left:418px;color:#00ff00">E3: 8.46</span>
<span class="t i" style="left:478px;color:#00c8c8">平均成本: 8.98</span>
<span class="t i" style="left:574px;color:#ff0000">DD1: 10.76</span>
<span class="t i" style="left:650px;color:#55ffff">换手率: 16.70</span>
<span class="t i" style="left:740px;color:#ff0">筹码参数: 1.79</span>
<span class="t i" style="left:827px;color:#ff20ff">获利比例: -</span>
<span class="t i" style="left:895px;color:#ff0">换手: 43.38</span>
<span class="t i" style="left:973px;color:#55ffff">趋势高点: 11.96</span>
<span class="t i" style="left:1077px;color:#ff0">见底: 11.51</span>
<span class="t i" style="left:1145px;color:#a020f0">平衡线: 7.96</span>

<!-- left notes -->
<span class="t l" style="left:15px;top:74px;color:#f00">行业:</span><span class="t l" style="left:51px;top:74px">服饰</span>
<span class="t l" style="left:15px;top:100px;color:#f00">概念:</span><span class="t l" style="left:51px;top:100px">海峡西岸 跨境电商 口罩防护</span>
<span class="t l" style="left:15px;top:126px;color:#f00">地区:</span><span class="t l" style="left:51px;top:126px">福建板块</span><span class="t l" style="left:188px;top:126px;color:#00ff00">解禁日期:</span>
<span class="t l" style="left:15px;top:153px;color:#f00">风格:</span><span class="t l" style="left:51px;top:153px">融资融券 证金汇金持股 绩优股</span>

<!-- chart annotations -->
<span class="t a" style="left:140px;top:295px">逃顶!</span>
<span class="t a" style="left:306px;top:293px">逃顶!</span>
<span class="t a" style="left:686px;top:190px">逃顶!</span>
<span class="t a" style="left:1128px;top:138px">逃顶!龙</span>
<span class="t a" style="left:127px;top:323px">龙</span>
<span class="t a" style="left:657px;top:277px">龙</span>
<span class="t a" style="left:744px;top:250px">龙</span>
<span class="t a" style="left:840px;top:235px">龙</span>
<span class="t a" style="left:1248px;top:179px">龙</span>
<span class="t a" style="left:1370px;top:134px">龙</span>
<span class="t a" style="left:5px;top:336px;color:#f00">下探</span>
<span class="t a" style="left:643px;top:284px;color:#f00">下探</span>
<span class="t a" style="left:686px;top:201px;color:#f00">下探</span>
<span class="t a" style="left:1130px;top:150px;color:#f00">下探</span>
<span class="t a" style="left:1401px;top:91px;color:#f00">下探</span>
<span class="t a" style="left:136px;top:364px">暴涨</span>
<span class="t a" style="left:667px;top:319px">暴涨</span>
<span class="t a" style="left:1256px;top:240px">↖暴涨</span>
<span class="t a" style="left:1376px;top:183px">↖暴涨</span>
<span class="t a" style="left:96px;top:365px;color:#a8a8a8">←6.70</span>
<span class="t a" style="left:1402px;top:105px;color:#aaa">12.66</span>
<span class="t a" style="left:1387px;top:161px">主力吸筹</span>
<span class="t a" style="left:1252px;top:153px">机构量化评分系统</span>
<span class="t a" style="left:1252px;top:168px;color:#f00">机构评分:&nbsp; 30.00</span>
<span class="t a" style="left:1252px;top:183px;color:#55ffff">今日阻力:&nbsp; 11.93</span>
<span class="t a" style="left:1252px;top:198px;color:#ff9090">今日支撑:&nbsp; 11.37</span>
<span class="t a" style="left:1257px;top:214px;color:#fff">利胜巅峰</span>
<span class="t" style="left:682px;top:449px;width:12px;text-align:center;color:#8f8">跌</span>
<span class="t" style="left:955px;top:449px;width:12px;text-align:center;color:#9cf">财</span>
<span class="t" style="left:1152px;top:449px;width:12px;text-align:center;color:#fc8">榜</span>
<span class="t" style="left:1365px;top:449px;width:12px;text-align:center;color:#fbb">涨</span>
<span class="t" style="left:263px;top:660px;font-size:12px;font-weight:bold;color:#f00">加持</span>
<span class="t" style="left:811px;top:660px;font-size:12px;font-weight:bold;color:#f00">加持</span>
<span class="t" style="left:644px;top:799px;font-size:12px;font-weight:bold;color:#ff0">介入</span>

<!-- upper axis labels -->
<span class="t at" style="top:74px;color:#aeaeae">11.79</span>
<span class="t at" style="top:92px;color:#c4c400">595</span>
<span class="t at" style="top:112px;color:#aeaeae">11.78</span>
<span class="t at" style="top:130px;color:#c4c400">2642</span>
<span class="t at" style="top:155px;color:#ff2020">11.78</span>
<span class="t at" style="top:173px;color:#ff2020">▲0.52</span>
<span class="t at" style="top:191px;color:#ff2020">4.62%</span>
<span class="t at" style="top:209px;color:#c8c8c8">13294</span>
<span class="t ax" style="top:263px">9.00</span><span class="t ax" style="top:307px">8.00</span><span class="t ax" style="top:352px">7.00</span><span class="t ax" style="top:396px">6.00</span><span class="t ax" style="top:441px">5.00</span>

<!-- lower header -->
<span class="t" style="left:17px;top:465px;font-size:13px;color:#b0b0b0">资金方向</span>
<span class="t i" style="left:74px;top:465px;color:#4a98f0">生命线: 65.73</span>
<span class="t i" style="left:165px;top:465px;color:#f00">资金方向: 69.88</span>
<span class="t i" style="left:269px;top:465px;color:#ff0">资金拐点: 69.53</span>
<span class="t i" style="left:372px;top:465px;color:#fff">多空分界: 50.00</span>
<span class="t i" style="left:467px;top:465px;color:#f00">低吸: 0.00</span>
<span class="t i" style="left:527px;top:465px;color:#00e800">高抛: 100.00</span>

<!-- lower axis -->
<span class="t ax" style="top:476px">100.00</span><span class="t ax" style="top:523px">90.00</span><span class="t ax" style="top:569px">80.00</span><span class="t ax" style="top:615px">70.00</span><span class="t ax" style="top:660px">60.00</span><span class="t ax" style="top:706px">50.00</span><span class="t ax" style="top:753px">40.00</span><span class="t ax" style="top:799px">30.00</span><span class="t ax" style="top:845px">20.00</span>

<!-- date axis -->
<span class="t" style="left:4px;top:955px;font-size:13px;font-weight:bold;color:#ff2020">2025年</span>
<span class="t" style="left:80px;top:955px;font-size:13px;font-weight:bold;color:#ff2020">8</span>
<span class="t" style="left:400px;top:955px;font-size:13px;font-weight:bold;color:#ff2020">9</span>
<span class="t" style="left:735px;top:955px;font-size:13px;font-weight:bold;color:#ff2020">10</span>
<span class="t" style="left:992px;top:955px;font-size:13px;font-weight:bold;color:#ff2020">11</span>
<span class="t" style="left:1296px;top:955px;font-size:13px;font-weight:bold;color:#ff2020">12</span>
<span class="t" style="left:1563px;top:955px;width:51px;text-align:center;font-size:13px;color:#c8c8c8">日线</span>

<!-- tabs -->
<span class="t tab" style="left:2px;width:38px">指标A</span><span class="t tab" style="left:40px;width:32px">窗口</span><span class="t tab" style="left:72px;width:36px">WOL</span><span class="t tab" style="left:108px;width:54px">双紫擒龙</span><span class="t tab" style="left:162px;width:57px">强势起爆</span><span class="t tab" style="left:219px;width:33px">均线</span><span class="t tab" style="left:252px;width:32px">擒龙</span><span class="t tab" style="left:284px;width:55px">镇店之宝</span><span class="t tab" style="left:339px;width:56px">飞碟妖龙</span><span class="t tab" style="left:395px;width:45px">主进出</span><span class="t tab" style="left:440px;width:79px">十全十美指标</span><span class="t tab" style="left:519px;width:33px">加仓</span><span class="t tab" style="left:552px;width:31px">转点</span><span class="t tab" style="left:583px;width:40px">资金2</span><span class="t tab" style="left:623px;width:43px">宁波敢</span><span class="t tab" style="left:666px;width:30px">AI龙</span><span class="t tab" style="left:696px;width:33px">顶底</span><span class="t tab" style="left:729px;width:56px;color:#55ffff">资金方向</span><span class="t tab" style="left:785px;width:43px">主控盘</span><span class="t tab" style="left:828px;width:45px">战神号</span><span class="t tab" style="left:873px;width:57px">动能二号</span><span class="t tab" style="left:930px;width:43px">飞碟妖</span><span class="t tab" style="left:973px;width:56px">财神到家</span><span class="t tab" style="left:1029px;width:56px">游资里潮</span><span class="t tab" style="left:1085px;width:32px">多空</span><span class="t tab" style="left:1117px;width:55px">冰火量能</span><span class="t tab" style="left:1172px;width:57px">趋势多空</span><span class="t tab" style="left:1229px;width:56px">三龙聚首</span><span class="t tab" style="left:1285px;width:44px">热力图</span><span class="t tab" style="left:1329px;width:56px">短线情绪</span><span class="t tab" style="left:1385px;width:32px">暗盘</span><span class="t tab" style="left:1417px;width:45px">全仓买</span><span class="t tab" style="left:1462px;width:15px">&gt;</span><span class="t tab" style="left:1480px;width:43px">指标B</span><span class="t tab" style="left:1523px;width:40px">模 板</span><span class="t tab" style="left:1563px;width:27px;color:#ccc">+</span><span class="t tab" style="left:1590px;width:24px;color:#ccc">-</span>
<span class="t tab tb2" style="left:2px;width:38px">扩展∧</span><span class="t tab tb2" style="left:40px;width:55px">关联报价</span><span class="t tab tb2" style="left:95px;width:57px">资金流向</span><span class="t tab tb2" style="left:152px;width:56px;color:#d8d800">综合资讯</span><span class="t tab tb2" style="left:208px;width:54px;color:#d8d800">板块资讯</span>
<span class="t tab tb2" style="left:1516px;width:47px;color:#d8d800">图文F10</span><span class="t tab tb2" style="left:1563px;width:51px;color:#d8d800">侧边栏《</span>
<span class="t tab tb2" style="left:1615px;width:31px;color:#55ffff">笔</span><span class="t tab tb2" style="left:1646px;width:31px">价</span><span class="t tab tb2" style="left:1677px;width:31px">细</span><span class="t tab tb2" style="left:1708px;width:31px">势</span><span class="t tab tb2" style="left:1739px;width:31px">联</span><span class="t tab tb2" style="left:1770px;width:31px">值</span><span class="t tab tb2" style="left:1801px;width:31px">主</span><span class="t tab tb2" style="left:1832px;width:31px">逆</span><span class="t tab tb2" style="left:1863px;width:31px">筹</span>

<!-- news -->
<span class="t nw" style="left:0">导体板块调整</span>
<span class="t nw" style="left:115px">字节跳动正与联想推进AI手机合作</span>
<span class="t nw" style="left:334px">凯投宏观：日本潜在通胀可能保持良好态势</span>
<span class="t nw" style="left:603px">道富环球：日本加息使政策利率达30年来最高水平 已接近转折点</span>
<span class="t nw" style="left:985px">长城证券：行业逐步迈向高阶智驾 持续看好相关产业链投资机会</span>
<span class="t nw" style="left:1367px">连续14日上涨！电解锰价格飙升，哪些公司受益？（名单）</span>
<span class="t nw" style="left:1719px">海南自贸港封关首日 “一线”进</span>

<!-- status -->
<span class="t st" style="left:25px;color:#e6e8ec">上证</span><span class="t st" style="left:61px;color:#f04848">3890.45</span><span class="t st" style="left:133px;color:#f04848">14.08</span><span class="t st" style="left:184px;color:#f04848">0.36%</span><span class="t st" style="left:240px;color:#e6e8ec">7381亿</span>
<span class="t st" style="left:299px;color:#e6e8ec">深证</span><span class="t st" style="left:335px;color:#f04848">13140.21</span><span class="t st" style="left:407px;color:#f04848">86.24</span><span class="t st" style="left:450px;color:#f04848">0.66%</span><span class="t st" style="left:514px;color:#e6e8ec">9878亿</span>
<span class="t st" style="left:574px;color:#e6e8ec">创业</span><span class="t st" style="left:609px;color:#f04848">3122.24</span><span class="t st" style="left:683px;color:#f04848">15.18</span><span class="t st" style="left:732px;color:#f04848">0.49%</span><span class="t st" style="left:789px;color:#e6e8ec">4447亿</span>
<span class="t st" style="left:852px;color:#e6e8ec">总成交</span><span class="t st" style="left:903px;color:#e6e8ec">17489亿</span>
<span class="t st" style="left:987px;color:#ccc;font-size:12px">3</span>
<span class="t st" style="left:1001px;color:#e6e8ec;font-size:12px">已连接</span>
<span class="t st" style="left:1845px;color:#e8e0b0;font-size:12px">16:58:57</span>

<!-- right panel head -->
<span class="t" style="left:1632px;top:31px;font-size:20px;line-height:26px;font-weight:bold;color:#55ffff;font-family:'Liberation Sans','Noto Serif CJK SC',serif">七 匹 狼</span>
<span class="t" style="left:1705px;top:37px;font-size:13px;color:#aeaeae">002029</span>
<span class="t" style="left:1757px;top:32px;font-size:12px;font-weight:bold;color:#ff3030">R</span>
<span class="t" style="left:1618px;top:60px;font-size:19px;line-height:24px;font-weight:bold;color:#ff2828">11.78</span>
<span class="t" style="left:1716px;top:60px;font-size:19px;line-height:24px;font-weight:bold;color:#ff2828">▲0.52</span>
<span class="t" style="right:27px;top:60px;font-size:19px;line-height:24px;font-weight:bold;color:#ff2828">4.62%</span>

<!-- order book -->
<span class="t lb" style="top:89px">卖五</span><span class="t v rd" style="top:89px">11.83</span><span class="t v2 yl" style="top:89px">6242</span>
<span class="t lb" style="top:107px">卖四</span><span class="t v rd" style="top:107px">11.82</span><span class="t v2 yl" style="top:107px">676</span>
<span class="t lb" style="top:124px">卖三</span><span class="t v rd" style="top:124px">11.81</span><span class="t v2 yl" style="top:124px">916</span>
<span class="t lb" style="top:142px">卖二</span><span class="t v rd" style="top:142px">11.80</span><span class="t v2 yl" style="top:142px">1446</span>
<span class="t lb" style="top:160px">卖一</span><span class="t v rd" style="top:160px">11.79</span><span class="t v2 yl" style="top:160px">595</span>
<span class="t lb" style="top:180px">买一</span><span class="t v rd" style="top:180px">11.78</span><span class="t v2 yl" style="top:180px">2642</span>
<span class="t lb" style="top:198px">买二</span><span class="t v rd" style="top:198px">11.77</span><span class="t v2 yl" style="top:198px">565</span>
<span class="t lb" style="top:216px">买三</span><span class="t v rd" style="top:216px">11.76</span><span class="t v2 yl" style="top:216px">1581</span>
<span class="t lb" style="top:234px">买四</span><span class="t v rd" style="top:234px">11.75</span><span class="t v2 yl" style="top:234px">3847</span>
<span class="t lb" style="top:252px">买五</span><span class="t v rd" style="top:252px">11.74</span><span class="t v2 yl" style="top:252px">595</span>

<!-- stats -->
<span class="t lb" style="top:273px">今开</span><span class="t v rd" style="top:273px">11.40</span><span class="t lb lb2" style="top:273px">均价</span><span class="t v2 rd" style="top:273px">11.78</span>
<span class="t lb" style="top:292px">最高</span><span class="t v rd" style="top:292px">11.96</span><span class="t lb lb2" style="top:292px">量比</span><span class="t v2 rd" style="top:292px">1.10</span>
<span class="t lb" style="top:311px">最低</span><span class="t v rd" style="top:311px">11.40</span><span class="t lb lb2" style="top:311px">市值</span><span class="t v2 gy" style="top:311px">83.1亿</span>
<span class="t lb" style="top:330px">现量</span><span class="t v" style="top:330px;color:#c000c0">13294</span><span class="t lb lb2" style="top:330px">总量</span><span class="t v2 gy" style="top:330px">656673</span>
<span class="t lb" style="top:349px">外盘</span><span class="t v rd" style="top:349px">372682</span><span class="t lb lb2" style="top:349px">内盘</span><span class="t v2" style="top:349px;color:#00e800">283991</span>
<span class="t lb" style="top:370px">换手</span><span class="t v gy" style="top:370px">9.87%</span><span class="t lb lb2" style="top:370px">股本</span><span class="t v2 gy" style="top:370px">7.05亿</span>
<span class="t lb" style="top:389px">净资</span><span class="t v gy" style="top:389px">9.68</span><span class="t lb lb2" style="top:389px">流通</span><span class="t v2 gy" style="top:389px">6.65亿</span>
<span class="t lb" style="top:408px">收益㈢</span><span class="t v gy" style="top:408px">0.590</span><span class="t lb lb2" style="top:408px;font-size:14px">PE(动)</span><span class="t v2 gy" style="top:408px">15.5</span>
<span class="t lb" style="top:431px;left:1616px">交易状态: 闭市阶段</span><span class="t" style="left:1765px;top:431px;font-size:14px;color:#aeaeae">15:00:00</span>
<span class="t lb" style="top:452px">主力净额</span><span class="t" style="left:1807px;top:452px;font-size:14px;color:#ff3030">4287万</span><span class="t v2 rd" style="top:452px">6%</span>

<!-- ticks -->
<div id="ticks">
<div><i>14:55</i><b>11.78</b><u>205</u><s>B</s><em>28</em></div>
<div><b>11.77</b><u>381</u><s class="g">S</s><em>73</em></div>
<div><b>11.77</b><u>163</u><s>B</s><em>17</em></div>
<div><b>11.77</b><u>392</u><s>B</s><em>26</em></div>
<div><b>11.76</b><u>118</u><s class="g">S</s><em>20</em></div>
<div><b>11.77</b><u>334</u><s>B</s><em>26</em></div>
<div><i>14:56</i><b>11.77</b><u>429</u><s class="g">S</s><em>40</em></div>
<div><b>11.77</b><u>270</u><s class="g">S</s><em>45</em></div>
<div><b>11.77</b><u>51</u><s>B</s><em>21</em></div>
<div><b>11.77</b><u>302</u><s>B</s><em>27</em></div>
<div><b>11.77</b><u>345</u><s>B</s><em>37</em></div>
<div><b>11.76</b><u style="color:#c000c0">532</u><s class="g">S</s><em>57</em></div>
<div><b>11.76</b><u>252</u><s class="g">S</s><em>23</em></div>
<div><b>11.77</b><u>166</u><s>B</s><em>19</em></div>
<div><b>11.77</b><u>96</u><s>B</s><em>22</em></div>
<div><b>11.77</b><u>368</u><s>B</s><em>36</em></div>
<div><b>11.77</b><u>215</u><s class="g">S</s><em>39</em></div>
<div><b>11.77</b><u>138</u><s>B</s><em>19</em></div>
<div><b>11.76</b><u>225</u><s class="g">S</s><em>39</em></div>
<div><b>11.76</b><u>165</u><s class="g">S</s><em>39</em></div>
<div><b>11.76</b><u>300</u><s class="g">S</s><em>38</em></div>
<div><b>11.76</b><u>162</u><s class="g">S</s><em>15</em></div>
<div><b>11.77</b><u>292</u><s>B</s><em>38</em></div>
<div><b>11.76</b><u>185</u><s class="g">S</s><em>24</em></div>
<div><b>11.76</b><u>292</u><s class="g">S</s><em>39</em></div>
<div><b>11.75</b><u>93</u><s class="g">S</s><em>18</em></div>
<div><i>14:57</i><b>11.76</b><u>150</u><s>B</s><em>21</em></div>
<div><i>15:00</i><b>11.78</b><u style="color:#c000c0">13294</u><em>859</em></div>
</div>

<!-- sidebar labels -->
<span class="t" style="left:1900px;top:220px;width:16px;text-align:center;font-size:11px;color:#1850c0">F10</span>
<span class="t" style="left:1900px;top:264px;width:16px;text-align:center;font-size:12px;color:#e06010">自</span>
<span class="t" style="left:1900px;top:288px;width:16px;text-align:center;font-size:11px;color:#1850c0">F12</span>
<span class="t" style="left:1900px;top:310px;width:16px;text-align:center;font-size:12px;font-style:italic;color:#10707a">fx</span>
<span class="t" style="left:1896px;top:387px;width:24px;text-align:center;font-size:10px;font-weight:bold;color:#1c48c0">RSI</span>
<span class="t" style="left:1900px;top:487px;width:16px;text-align:center;font-size:11px;color:#1850c0">Fs</span>
<span class="t" style="left:1897px;top:533px;width:21px;text-align:center;color:#1850a0">1</span>
<span class="t" style="left:1897px;top:556px;width:21px;text-align:center;color:#1850a0">5</span>
<span class="t" style="left:1897px;top:579px;width:21px;text-align:center;color:#1850a0">15</span>
<span class="t" style="left:1897px;top:602px;width:21px;text-align:center;color:#1850a0">30</span>
<span class="t" style="left:1897px;top:625px;width:21px;text-align:center;color:#1850a0">60</span>
<span class="t" style="left:1897px;top:648px;width:21px;text-align:center;color:#1850a0">日</span>
<span class="t" style="left:1897px;top:671px;width:21px;text-align:center;color:#1850a0">周</span>
<span class="t" style="left:1897px;top:695px;width:21px;text-align:center;color:#1850a0">月</span>
<span class="t" style="left:1897px;top:718px;width:21px;text-align:center;color:#1850a0">N</span>
<span class="t" style="left:1897px;top:741px;width:21px;text-align:center;color:#1850a0">多</span>
<span class="t" style="left:1897px;top:764px;width:21px;text-align:center;color:#1850a0">季</span>
<span class="t" style="left:1897px;top:787px;width:21px;text-align:center;color:#1850a0">年</span>
</body>
</html>
